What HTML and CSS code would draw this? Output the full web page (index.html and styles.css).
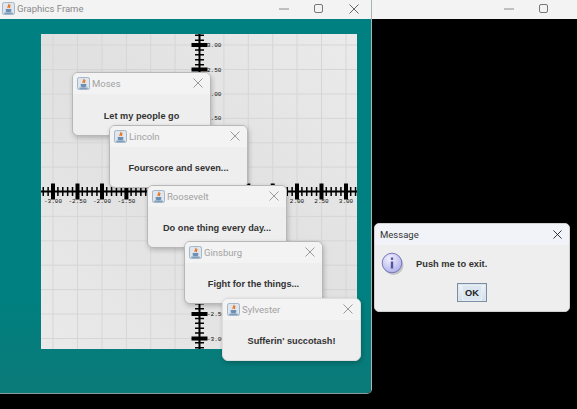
FILE: index.html
```html
<!DOCTYPE html>
<html lang="en">
<head>
<meta charset="utf-8">
<title>Graphics Frame</title>
<link rel="stylesheet" href="styles.css">
</head>
<body>
<svg class="defs" width="0" height="0" aria-hidden="true">
  <symbol id="java" viewBox="0 0 14 14">
    <rect x=".5" y=".5" width="13" height="13" rx="2" fill="#dfe6ee" stroke="#9db0c2"/>
    <path d="M7.200 2c1.400 1.600-1.600 2.400-.6 4.500M9 3.500c-1.200.8-1.400 1.700-.8 3" fill="none" stroke="#e8741f" stroke-width="1.300"/>
    <path d="M4 7.500h6v2.300c0 .8-.8 1.200-1.600 1.200H5.600C4.800 11 4 10.600 4 9.800z" fill="#6d8fb3"/>
    <path d="M2.500 12h9" stroke="#3f6f9f" stroke-width="1"/>
  </symbol>
  <symbol id="min" viewBox="0 0 10 10"><path d="M0 5h10" stroke="#8c8c8c"/></symbol>
  <symbol id="max" viewBox="0 0 10 10"><rect x=".5" y=".5" width="8" height="8" rx="1.500" fill="none" stroke="#777"/></symbol>
  <symbol id="x" viewBox="0 0 10 10"><path d="M.5.500l9 9M9.500.500l-9 9" fill="none" stroke="currentColor"/></symbol>
</svg>

<main class="desktop">
  <section class="window back-window">
    <header class="os-title">
      <svg class="os-btn"><use href="#min"/></svg>
      <svg class="os-btn"><use href="#max"/></svg>
    </header>
  </section>

  <section class="window graphics-frame">
    <header class="os-title">
      <svg class="java-icon"><use href="#java"/></svg>
      <span class="os-name">Graphics Frame</span>
      <svg class="os-btn"><use href="#min"/></svg>
      <svg class="os-btn"><use href="#max"/></svg>
      <svg class="os-btn close-btn"><use href="#x"/></svg>
    </header>
    <div class="teal">
      <svg class="plot" viewBox="41 34 316 315" width="316" height="315">
        <defs>
          <linearGradient id="paper" x1="1" y1="0" x2="0" y2="1">
            <stop offset="0" stop-color="#ebebeb"/>
            <stop offset=".5" stop-color="#e0e0e0"/>
            <stop offset="1" stop-color="#eaeaea"/>
          </linearGradient>
        </defs>
        <rect x="41" y="34" width="316" height="315" fill="url(#paper)"/>
        <g class="grid">
          <path d="M53 34v315M77.500 34v315M102 34v315M126.400 34v315M150.800 34v315M175.100 34v315M199.500 34v315M223.900 34v315M248.300 34v315M272.700 34v315M297 34v315M321.500 34v315M346 34v315"/>
          <path d="M41 45h316M41 69.500h316M41 94h316M41 118.400h316M41 142.800h316M41 167.100h316M41 191.500h316M41 216.400h316M41 240.800h316M41 265.200h316M41 289.600h316M41 314h316M41 338.500h316"/>
        </g>
        <g stroke="#000">
          <path d="M41 191.500h316" stroke-width="2"/>
          <path d="M199.500 34v315" stroke-width="2"/>
          <line class="minor" x1="42.500" y1="191.500" x2="357" y2="191.500"/>
          <line class="minor" x1="199.500" y1="34.600" x2="199.500" y2="349"/>
          <path class="major" d="M53 183.500v16M77.500 183.500v16M102 183.500v16M126.400 183.500v16M150.800 183.500v16M175.100 183.500v16M223.900 183.500v16M248.300 183.500v16M272.700 183.500v16M297 183.500v16M321.500 183.500v16M346 183.500v16M191.500 45h16M191.500 69.500h16M191.500 314h16M191.500 338.500h16"/>
        </g>
        <g class="tick-x">
          <text x="53" y="203">-3.00</text><text x="77.500" y="203">-2.50</text><text x="102" y="203">-2.00</text><text x="126.400" y="203">-1.50</text>
          <text x="297" y="203">2.00</text><text x="321.500" y="203">2.50</text><text x="346" y="203">3.00</text>
        </g>
        <g class="tick-y">
          <text x="207" y="47">3.00</text><text x="207" y="71.500">2.50</text><text x="207" y="96">2.00</text><text x="207" y="120.400">1.50</text>
          <text x="207" y="316">-2.50</text><text x="207" y="340.500">-3.00</text>
        </g>
      </svg>
    </div>
  </section>

  <article class="inner moses">
    <header class="inner-title"><svg class="java-icon"><use href="#java"/></svg><span class="inner-name">Moses</span><svg class="inner-close"><use href="#x"/></svg></header>
    <p class="inner-msg">Let my people go</p>
  </article>
  <article class="inner lincoln">
    <header class="inner-title"><svg class="java-icon"><use href="#java"/></svg><span class="inner-name">Lincoln</span><svg class="inner-close"><use href="#x"/></svg></header>
    <p class="inner-msg">Fourscore and seven...</p>
  </article>
  <article class="inner roosevelt">
    <header class="inner-title"><svg class="java-icon"><use href="#java"/></svg><span class="inner-name">Roosevelt</span><svg class="inner-close"><use href="#x"/></svg></header>
    <p class="inner-msg">Do one thing every day...</p>
  </article>
  <article class="inner ginsburg">
    <header class="inner-title"><svg class="java-icon"><use href="#java"/></svg><span class="inner-name">Ginsburg</span><svg class="inner-close"><use href="#x"/></svg></header>
    <p class="inner-msg">Fight for the things...</p>
  </article>
  <article class="inner sylvester">
    <header class="inner-title"><svg class="java-icon"><use href="#java"/></svg><span class="inner-name">Sylvester</span><svg class="inner-close"><use href="#x"/></svg></header>
    <p class="inner-msg">Sufferin' succotash!</p>
  </article>

  <section class="message">
    <header class="message-title"><span>Message</span><svg class="message-close"><use href="#x"/></svg></header>
    <div class="message-body">
      <div class="message-row">
        <svg class="info" viewBox="0 0 24 24" width="24" height="24">
          <defs><radialGradient id="infoFill" cx=".4" cy=".3" r=".8"><stop offset="0" stop-color="#f2f2ff"/><stop offset="1" stop-color="#a9a9ea"/></radialGradient></defs>
          <circle cx="12.500" cy="13" r="10" fill="#9a9a9a" opacity=".5"/>
          <circle cx="11" cy="11" r="9.800" fill="url(#infoFill)" stroke="#7777bb"/>
          <rect x="9.800" y="9.500" width="2.400" height="7" fill="#55559a"/>
          <rect x="9.800" y="5.500" width="2.400" height="2.400" fill="#55559a"/>
        </svg>
        <span class="message-text">Push me to exit.</span>
      </div>
      <button class="ok"><span class="ok-focus">OK</span></button>
    </div>
  </section>
</main>
</body>
</html>
```

FILE: styles.css
```css
* { box-sizing: border-box; }
html, body { margin: 0; padding: 0; }
body { width: 577px; height: 409px; overflow: hidden; background: #000; font-family: Roboto, "Liberation Sans", sans-serif; }
.defs { position: absolute; }
.desktop { position: relative; width: 577px; height: 409px; background: #000; overflow: hidden; }

.window { position: absolute; top: 0; }
.back-window { left: 372px; width: 220px; }
.graphics-frame {
  left: 0; width: 372px; height: 394px;
  display: flex; flex-direction: column;
  border-right: 1px solid #a9b4b4; border-bottom: 1px solid #8c9c9c;
  border-bottom-right-radius: 5px; overflow: hidden;
}
.os-title {
  height: 19px; flex: none; background: #f3f3f3;
  display: flex; align-items: center; justify-content: flex-end;
  padding: 0 12px 2px 2px;
}
.back-window .os-title { padding-right: 43px; }
.java-icon { width: 13px; height: 13px; flex: none; }
.os-name { margin-right: auto; margin-left: 2px; font-size: 9.500px; color: #8a8a8a; }
.os-btn { width: 10px; height: 10px; flex: none; margin-left: 25px; }
.close-btn { color: #666; }

.teal {
  flex: 1; padding: 15px 0 0 41px;
  background: linear-gradient(180deg, #008080 0%, #008080 75%, #0b7a78 100%);
}
.plot { display: block; }
.grid { stroke: #d6d6d6; stroke-width: 1; fill: none; }
.minor { stroke-width: 9; stroke-dasharray: 1.500 3.380; }
.major { stroke-width: 4; fill: none; }
.tick-x text, .tick-y text { font-family: "Liberation Mono", monospace; font-size: 6px; fill: #111; stroke: none; }
.tick-x text { text-anchor: middle; }

.inner {
  position: absolute; width: 139px; height: 63px;
  border-radius: 6px; background: #eeeeee;
  border: 1px solid #b8b8b8;
  box-shadow: 1px 2px 5px rgba(0,0,0,.22);
  display: flex; flex-direction: column; overflow: hidden;
}
.moses { left: 72px; top: 72px; height: 64px; }
.lincoln { left: 109px; top: 125px; }
.roosevelt { left: 147px; top: 185px; width: 140px; }
.ginsburg { left: 184px; top: 241px; }
.sylvester { left: 222px; top: 298px; border-color: #dddddd; }
.inner-title {
  height: 21px; flex: none; background: #f3f3f3;
  display: flex; align-items: center; padding: 0 7px 1px 4px;
}
.inner-name { margin-left: 2px; font-size: 9.500px; color: #a2a2a2; }
.inner-close { width: 10px; height: 10px; margin-left: auto; color: #9a9a9a; }
.inner-msg {
  margin: 0; flex: 1; display: flex; align-items: center; justify-content: center;
  padding-top: 2px;
  font-family: "Liberation Sans", sans-serif; font-weight: 700; font-size: 9.200px; color: #333;
}

.message {
  position: absolute; left: 374px; top: 223px; width: 196px; height: 89px;
  border-radius: 5px; overflow: hidden; background: #eeeeee;
  border: 1px solid #cfcfcf;
  display: flex; flex-direction: column;
}
.message-title {
  height: 21px; flex: none; background: #f2f3f9; color: #333;
  display: flex; align-items: center; justify-content: space-between;
  padding: 0 7px 0 5px; font-size: 9.500px;
}
.message-close { width: 9px; height: 9px; color: #222; }
.message-body { flex: 1; display: flex; flex-direction: column; }
.message-row { display: flex; align-items: center; padding: 7px 0 0 6px; gap: 11px; }
.info { flex: none; }
.message-text { font-family: "Liberation Sans", sans-serif; font-weight: 700; font-size: 9.300px; color: #333; }
.ok {
  align-self: flex-start; margin: 7px 0 0 82px; padding: 0; width: 30px; height: 19px;
  border: 1px solid #7a8ea6; background: linear-gradient(180deg, #f0f4f8, #d3deea);
  display: flex; align-items: center; justify-content: center;
  box-shadow: inset 0 0 0 1px #dce4ec;
}
.ok-focus {
  padding: 1px 2px; background: #dce6f0; border: 1px solid #e8eef4;
  font-family: "Liberation Sans", sans-serif; font-weight: 700; font-size: 9.300px; color: #222; line-height: 12px;
}
```
